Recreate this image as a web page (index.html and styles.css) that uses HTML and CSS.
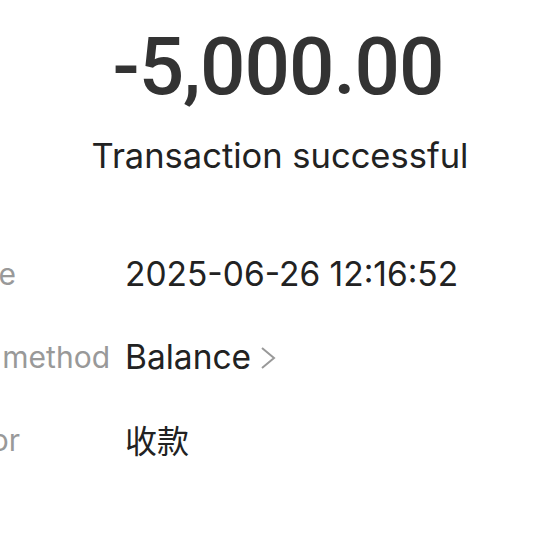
FILE: index.html
```html
<!DOCTYPE html>
<html>
<head>
<meta charset="utf-8">
<link rel="stylesheet" href="styles.css">
</head>
<body>
<div class="page">
  <div class="header">
    <div class="amount">-5,000.00</div>
    <div class="status">Transaction successful</div>
  </div>
  <div class="rows">
    <div class="row">
      <div class="label"><span class="l1">Time</span></div>
      <div class="value">2025-06-26 12:16:52</div>
    </div>
    <div class="row">
      <div class="label"><span class="l2">Payment method</span></div>
      <div class="value">Balance
        <svg class="chev" width="16" height="24" viewBox="0 0 16 24"><path d="M2 2 L14 12 L2 22" fill="none" stroke="#999" stroke-width="2"/></svg>
      </div>
    </div>
    <div class="row">
      <div class="label"><span class="l3">Paid for</span></div>
      <div class="value cjk">收款</div>
    </div>
  </div>
</div>
</body>
</html>
```
FILE: styles.css
```css
html, body {
  margin: 0;
  padding: 0;
  background: #fff;
}
.page {
  width: 560px;
  height: 560px;
  overflow: hidden;
  font-family: Inter, "Noto Sans CJK SC", sans-serif;
}
.header {
  display: flex;
  flex-direction: column;
  align-items: center;
  padding-top: 20px;
}
.amount {
  font-family: Roboto, sans-serif;
  font-weight: 500;
  font-size: 80px;
  line-height: 94px;
  color: #333;
  letter-spacing: -1px;
  padding-right: 4px;
}
.status {
  font-size: 34.5px;
  line-height: 50px;
  color: #222;
  margin-top: 17px;
}
.rows {
  display: flex;
  flex-direction: column;
  margin-top: 69px;
  gap: 35px;
}
.row {
  display: flex;
  align-items: center;
  height: 48px;
}
.label {
  width: 125px;
  flex: none;
  overflow: hidden;
  white-space: nowrap;
  font-size: 30px;
  color: #999;
  height: 48px;
  line-height: 48px;
  display: flex;
  justify-content: flex-end;
}
.label span {
  flex: none;
}
.l1 { margin-right: 109px; }
.l2 { margin-right: 15px; }
.l3 { margin-right: 105px; }
.value {
  font-size: 33.5px;
  color: #222;
  display: flex;
  align-items: center;
  gap: 9px;
  line-height: 48px;
}
.value .chev {
  margin-top: 1px;
}
.cjk {
  font-family: "Noto Sans CJK SC", sans-serif;
  font-size: 32px;
  margin-top: -3px;
}
.chev {
  display: block;
}
```
